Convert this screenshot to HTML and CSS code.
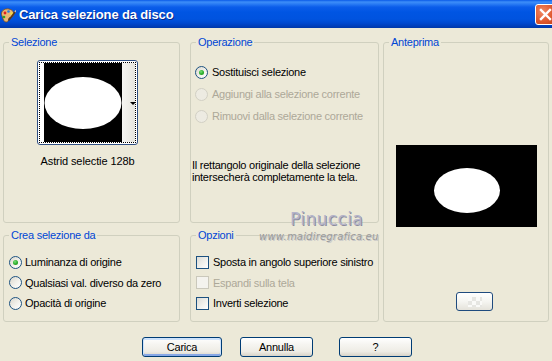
FILE: index.html
```html
<!DOCTYPE html>
<html lang="it">
<head>
<meta charset="utf-8">
<title>Carica selezione da disco</title>
<link rel="stylesheet" href="styles.css">
</head>
<body>
<div class="titlebar">
  <svg class="app-icon" width="16" height="16" viewBox="0 0 16 16">
    <path d="M2 9 C0 5 4 1 9 2 C13 3 15 6 13 9 C12 11 10 10 9 11 C8 13 9 15 6 15 C4 15 3 12 2 9 Z" fill="#E9B774" stroke="#7A4A1C" stroke-width="0.8"/>
    <circle cx="5" cy="6" r="1.4" fill="#E02020"/>
    <circle cx="8.5" cy="4.5" r="1.3" fill="#2A7AE0"/>
    <circle cx="4" cy="10" r="1.3" fill="#2BA32B"/>
    <circle cx="11.5" cy="6.5" r="1.2" fill="#F5E040"/>
    <path d="M9 13 L15 5" stroke="#5A3A1A" stroke-width="1.6" stroke-linecap="round"/>
    <path d="M15 5 L16 3.5" stroke="#C0C0C0" stroke-width="1.6"/>
  </svg>
  <span class="title">Carica selezione da disco</span>
  <div class="close">
    <svg width="13" height="13" viewBox="0 0 13 13"><path d="M2 2 L11 11 M11 2 L2 11" stroke="#fff" stroke-width="2.4" stroke-linecap="square"/></svg>
  </div>
</div>

<div class="layout">
  <fieldset class="group g-sel">
    <legend>Selezione</legend>
    <div class="sel-body">
      <div class="thumb-frame">
        <div class="thumb-focus">
          <svg class="thumb-img" width="78" height="79" viewBox="0 0 78 79">
            <rect width="78" height="79" fill="#000"/>
            <ellipse cx="39" cy="40" rx="38.5" ry="26" fill="#fff"/>
          </svg>
          <div class="thumb-strip"><span class="arrow"></span></div>
        </div>
      </div>
      <div class="caption">Astrid selectie 128b</div>
    </div>
  </fieldset>

  <fieldset class="group g-op">
    <legend>Operazione</legend>
    <div class="op-body">
      <div class="row r22"><span class="radio checked"></span><span>Sostituisci selezione</span></div>
      <div class="row r22"><span class="radio disabled"></span><span class="dis">Aggiungi alla selezione corrente</span></div>
      <div class="row r22"><span class="radio disabled"></span><span class="dis">Rimuovi dalla selezione corrente</span></div>
      <p class="note">Il rettangolo originale della selezione<br>intersecherà completamente la tela.</p>
    </div>
  </fieldset>

  <fieldset class="group g-prev">
    <legend>Anteprima</legend>
    <div class="prev-body">
      <svg class="prev-img" width="141" height="82" viewBox="0 0 141 82">
        <rect width="141" height="82" fill="#000"/>
        <ellipse cx="71" cy="45.5" rx="33" ry="22.5" fill="#fff"/>
      </svg>
      <div class="mini-btn"><span class="checker"></span></div>
    </div>
  </fieldset>

  <fieldset class="group g-crea">
    <legend>Crea selezione da</legend>
    <div class="list-body">
      <div class="row r20 gap3"><span class="radio checked"></span><span>Luminanza di origine</span></div>
      <div class="row r20 gap3"><span class="radio"></span><span>Qualsiasi val. diverso da zero</span></div>
      <div class="row r20 gap3"><span class="radio"></span><span>Opacità di origine</span></div>
    </div>
  </fieldset>

  <fieldset class="group g-opt">
    <legend>Opzioni</legend>
    <div class="list-body">
      <div class="row r20"><span class="check"></span><span>Sposta in angolo superiore sinistro</span></div>
      <div class="row r20"><span class="check disabled"></span><span class="dis">Espandi sulla tela</span></div>
      <div class="row r20"><span class="check"></span><span>Inverti selezione</span></div>
    </div>
  </fieldset>
</div>

<div class="actions">
  <div class="btn btn-default">Carica</div>
  <div class="btn btn-cancel">Annulla</div>
  <div class="btn btn-help">?</div>
</div>

<div class="wm-name">Pinuccia</div>
<div class="wm-url">www.maidiregrafica.eu</div>
</body>
</html>
```

FILE: styles.css
```css
* { box-sizing: border-box; }

body {
  margin: 0;
  width: 552px;
  height: 361px;
  overflow: hidden;
  position: relative;
  background: #ECE9D8;
  font-family: "Liberation Sans", Arial, sans-serif;
  font-size: 11px;
  letter-spacing: -0.25px;
  color: #000;
}

/* Title bar */
.titlebar {
  height: 28px;
  display: flex;
  align-items: center;
  background: linear-gradient(to bottom,
    #0A5AE8 0px, #3D8EF8 2px, #2A7CF4 4px, #0B5DEA 7px,
    #0055E3 12px, #0053DF 19px, #0049D0 23px, #003EBA 26px, #0038A8 28px);
}
.app-icon { flex: none; margin-top: 1px; }
.title {
  margin-left: 3px;
  color: #fff;
  font-weight: bold;
  font-size: 13px;
  letter-spacing: -0.15px;
  text-shadow: 1px 1px 0 #0A2A8C;
}
.close {
  margin-left: auto;
  margin-right: -4px;
  width: 21px;
  height: 21px;
  flex: none;
  border: 1px solid #fff;
  border-radius: 3px;
  background: radial-gradient(circle at 35% 35%, #F08A66 0%, #E0592F 55%, #C2401A 100%);
  display: flex;
  align-items: center;
  justify-content: center;
}

/* Groups layout */
.layout {
  display: grid;
  grid-template-columns: 177px 10px 189px 4px 166px;
  grid-template-rows: 187px 93px;
  row-gap: 6px;
  padding: 8px 0 0 3px;
}
.g-sel { grid-column: 1; grid-row: 1; }
.g-op { grid-column: 3; grid-row: 1; }
.g-prev { grid-column: 5; grid-row: 1 / 3; }
.g-crea { grid-column: 1; grid-row: 2; }
.g-opt { grid-column: 3; grid-row: 2; }

.group {
  margin: 0;
  padding: 0;
  min-width: 0;
  border: 1px solid #D0D0BF;
  border-radius: 3px;
}
.group legend {
  padding: 0 2px;
  margin-left: 5px;
  color: #0046D5;
  line-height: 13px;
}

/* Selezione */
.sel-body {
  display: flex;
  flex-direction: column;
  align-items: center;
  padding: 11px 8px 0 0;
}
.thumb-frame {
  width: 101px;
  height: 85px;
  border: 1px solid #2E4E82;
  border-radius: 3px;
  padding: 1px;
  background: #fff;
}
.thumb-focus {
  height: 100%;
  border: 1px dotted #000;
  display: flex;
  padding-left: 4px;
  background: #fff;
}
.thumb-img { display: block; flex: none; }
.thumb-strip {
  flex: 1;
  display: flex;
  align-items: center;
  justify-content: flex-end;
  background: linear-gradient(to right, #F6F6F3, #E6E5DE);
}
.arrow {
  width: 0;
  height: 0;
  margin-right: -1px;
  margin-top: 1px;
  border-left: 3px solid transparent;
  border-right: 3px solid transparent;
  border-top: 3px solid #000;
}
.caption { margin-top: 10px; line-height: 13px; letter-spacing: -0.1px; }

/* rows */
.row { display: flex; align-items: center; gap: 4px; white-space: nowrap; }
.r22 { height: 22px; }
.r20 { height: 20.5px; }
.gap3 { gap: 3px; }
.dis { color: #ACA899; }

.radio {
  flex: none;
  width: 13px;
  height: 13px;
  border-radius: 50%;
  border: 1px solid #1D5281;
  background: linear-gradient(135deg, #DCD9CE 0%, #F4F3EE 60%, #FFFFFF 100%);
  display: flex;
  align-items: center;
  justify-content: center;
}
.radio.checked::after {
  content: "";
  width: 5px;
  height: 5px;
  border-radius: 50%;
  background: radial-gradient(circle at 40% 35%, #7BE07B 0%, #2DB02D 50%, #1A8C1A 100%);
}
.radio.disabled {
  border-color: #D2D0C4;
  background: #EDEBE2;
}
.check {
  flex: none;
  width: 13px;
  height: 13px;
  border: 1px solid #1C5180;
  background: linear-gradient(135deg, #DCDCD7 0%, #F2F2EE 60%, #FFFFFF 100%);
}
.check.disabled {
  border-color: #CAC8BB;
  background: #F4F3EE;
}

/* Operazione */
.op-body { padding: 12px 0 0 4px; }
.note {
  margin: 33px 0 0 -3px;
  line-height: 11.5px;
}

/* Crea / Opzioni */
.list-body { padding: 10px 0 0 5px; }

/* Anteprima */
.prev-body {
  display: flex;
  flex-direction: column;
  align-items: flex-start;
  padding: 96px 0 0 12px;
}
.prev-img { display: block; }
.mini-btn {
  margin: 65px 0 0 60px;
  width: 37px;
  height: 19px;
  border: 1px solid #1F4B7E;
  border-radius: 3px;
  background: linear-gradient(to bottom, #FFFFFF 0%, #F5F5F1 50%, #E4E2DA 100%);
  display: flex;
  align-items: center;
  justify-content: center;
}
.checker {
  width: 14px;
  height: 10px;
  background: repeating-conic-gradient(#E6E6E2 0% 25%, #FAFAF8 0% 50%) 0 0 / 8px 8px;
}

/* Dialog buttons */
.actions {
  display: flex;
  margin-top: 15px;
  padding-left: 142px;
}
.btn {
  height: 20px;
  border: 1px solid #003C74;
  border-radius: 3px;
  background: linear-gradient(to bottom, #FFFFFF 0%, #F6F5F1 35%, #EEECE5 75%, #D8D3C8 100%);
  display: flex;
  align-items: center;
  justify-content: center;
  line-height: 13px;
}
.btn-default {
  width: 80px;
  box-shadow: inset 0 1px 0 1px #CEE3FC, inset 0 -1px 0 1px #88A8E6;
}
.btn-cancel { width: 73px; margin-left: 18px; }
.btn-help { width: 73px; margin-left: 26px; }

/* Watermark overlay */
.wm-name {
  position: absolute;
  left: 290px;
  top: 209px;
  font-family: "DejaVu Sans", Verdana, sans-serif;
  font-size: 17px;
  letter-spacing: 0.4px;
  color: #B4B4CA;
  text-shadow: 1px 1px 0 #8C8C9E;
}
.wm-url {
  position: absolute;
  left: 259px;
  top: 231px;
  font-family: "DejaVu Sans", Verdana, sans-serif;
  font-size: 10px;
  font-style: italic;
  letter-spacing: 0.2px;
  color: #9A9A9A;
  text-shadow: 1px 1px 0 #C8C8C8;
}
```
